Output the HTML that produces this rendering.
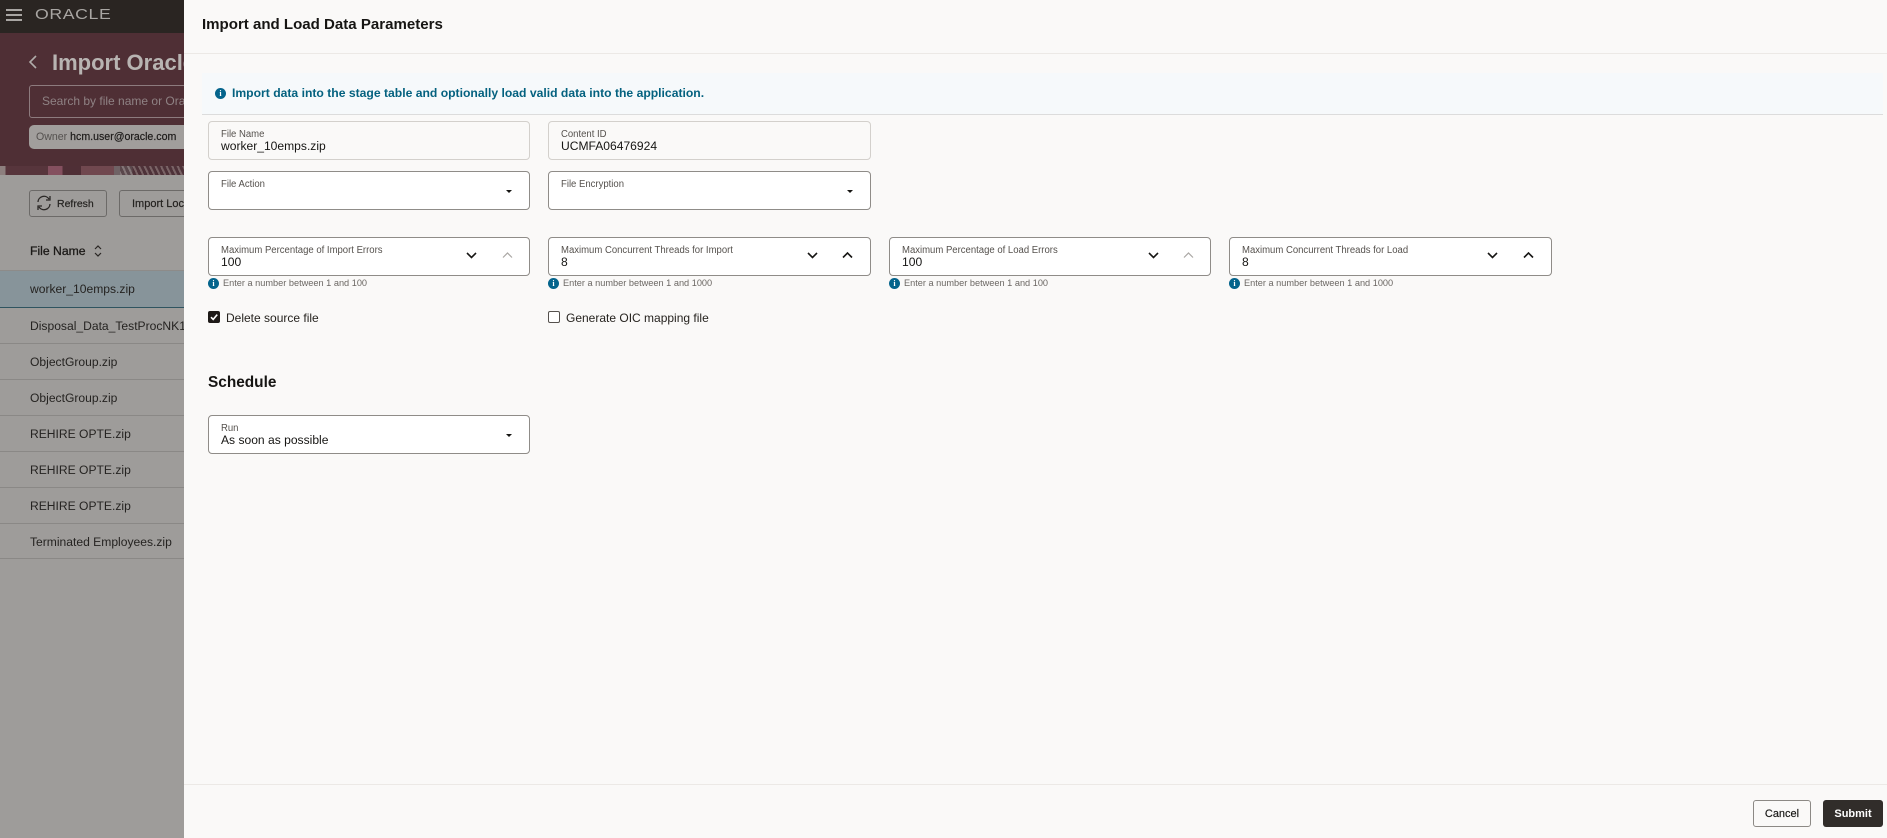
<!DOCTYPE html>
<html><head><meta charset="utf-8"><style>
*{box-sizing:border-box}
html,body{margin:0;padding:0;width:1887px;height:838px;overflow:hidden;background:#9e9c9a;font-family:"Liberation Sans",sans-serif;color:#161513}
.a{position:absolute;white-space:nowrap}
.left{position:absolute;left:0;top:0;width:184px;height:838px;overflow:hidden;background:#9e9c9a}
.row{position:absolute;left:0;width:184px;height:36px;border-bottom:1px solid #8a8886;font-size:12.1px;color:#252321;padding-left:30px;line-height:36px;white-space:nowrap}
.panel{position:absolute;left:184px;top:0;width:1703px;height:838px;background:#faf9f8}
.f{position:absolute;width:322px;height:39px;background:#fff;border:1px solid #8f8c88;border-radius:4px}
.f.ro{background:#faf9f8;border-color:#d3d0cc}
.f .l{position:absolute;left:12px;top:7px;font-size:9.9px;color:#55514d;white-space:nowrap;transform:scaleX(.965);transform-origin:left}
.f .v{position:absolute;left:12px;top:17px;font-size:12.4px;color:#161513;white-space:nowrap;transform:scaleX(.975);transform-origin:left}
.car{position:absolute;left:297px;top:18px;width:0;height:0;border-left:3.5px solid transparent;border-right:3.5px solid transparent;border-top:3.5px solid #161513}
.h{position:absolute;font-size:9.2px;color:#6b6763;white-space:nowrap}
.ic{position:absolute;width:11px;height:11px;border-radius:50%;background:#04648c;color:#fff;font-size:8px;font-weight:bold;text-align:center;line-height:11px;font-family:"Liberation Serif",serif}
svg{position:absolute;overflow:visible}
</style></head><body>
<div class="left">
<div class="a" style="left:0;top:0;width:184px;height:33px;background:#2a2522"></div>
<div class="a" style="left:6px;top:9px;width:16px;height:2px;background:#a9a6a3"></div>
<div class="a" style="left:6px;top:14px;width:16px;height:2px;background:#a9a6a3"></div>
<div class="a" style="left:6px;top:19px;width:16px;height:2px;background:#a9a6a3"></div>
<div class="a" style="left:35px;top:5px;font-size:14.5px;letter-spacing:.5px;color:#a9a6a3;transform:scaleX(1.22);transform-origin:left;line-height:20px">ORACLE</div>
<div class="a" style="left:0;top:33px;width:184px;height:133px;background:#4f2f35"></div>
<div class="a" style="left:0;top:166px;width:184px;height:9px;background:linear-gradient(90deg,#8d7f7e 0 3%,#57353c 3% 26%,#84505f 26% 34%,#4f2f36 34% 44%,#70484f 44% 62%,#6f6265 62% 72%,#57383e 72% 100%)"></div>
<div class="a" style="left:120px;top:166px;width:64px;height:9px;background:repeating-linear-gradient(65deg,rgba(150,135,135,.55) 0 2px,rgba(70,45,52,.5) 2px 5px)"></div>
<svg style="left:0;top:0" width="184" height="100"><path d="M36 56 L30 62 L36 68" fill="none" stroke="#b0acaa" stroke-width="1.6"/></svg>
<div class="a" style="left:52px;top:49px;font-size:22px;font-weight:bold;color:#b8b4b2;line-height:28px">Import Oracle</div>
<div class="a" style="left:29px;top:85px;width:200px;height:33px;border:1px solid #8d7b7e;border-radius:3px"></div>
<div class="a" style="left:42px;top:93px;font-size:12px;color:#8f8284;line-height:16px">Search by file name or Oracle</div>
<div class="a" style="left:29px;top:125px;width:200px;height:24px;background:#a19e9c;border-radius:5px"></div>
<div class="a" style="left:36px;top:130px;font-size:10.6px;color:#55514f;line-height:15px">Owner <span style="color:#1e1b1a;-webkit-text-stroke:.2px #1e1b1a">hcm.user@oracle.com</span></div>
<div class="a" style="left:29px;top:190px;width:78px;height:27px;border:1px solid #6c6a68;border-radius:3px"></div>
<svg style="left:36px;top:195px" width="16" height="16" viewBox="0 0 16 16" fill="none" stroke="#2a2725" stroke-width="1.3"><path d="M2 7A6 6 0 0 1 13 4M14 1v4h-4M14 9A6 6 0 0 1 3 12M2 15v-4h4"/></svg>
<div class="a" style="left:57px;top:197px;font-size:10.5px;color:#252321;line-height:15px;-webkit-text-stroke:.2px #252321">Refresh</div>
<div class="a" style="left:119px;top:190px;width:100px;height:27px;border:1px solid #6c6a68;border-radius:3px"></div>
<div class="a" style="left:132px;top:197px;font-size:11px;color:#252321;line-height:15px;-webkit-text-stroke:.2px #252321">Import Local</div>
<div class="a" style="left:30px;top:243px;font-size:12.2px;color:#1d1b19;line-height:17px;-webkit-text-stroke:.3px #1d1b19">File Name</div>
<svg style="left:92px;top:244px" width="12" height="14" fill="none" stroke="#2a2725" stroke-width="1.2"><path d="M3 5L6 2L9 5M3 9L6 12L9 9"/></svg>
<div class="a" style="left:0;top:270px;width:184px;height:1px;background:#8d8b89"></div>
<div class="row" style="top:271px;height:37px;background:#87949a;border-bottom:1px solid #2f5460">worker_10emps.zip</div>
<div class="row" style="top:308px">Disposal_Data_TestProcNK1.zip</div>
<div class="row" style="top:344px">ObjectGroup.zip</div>
<div class="row" style="top:380px">ObjectGroup.zip</div>
<div class="row" style="top:416px">REHIRE OPTE.zip</div>
<div class="row" style="top:452px">REHIRE OPTE.zip</div>
<div class="row" style="top:488px">REHIRE OPTE.zip</div>
<div class="row" style="top:524px;height:35px">Terminated Employees.zip</div>
</div>

<div class="panel">
<div class="a" style="left:18px;top:15px;font-size:15.05px;font-weight:bold;color:#161513;line-height:20px">Import and Load Data Parameters</div>
<div class="a" style="left:0;top:53px;width:1703px;height:1px;background:#ece9e6"></div>
<div class="a" style="left:18px;top:73px;width:1681px;height:42px;background:#f6f9fb;border-bottom:1px solid #dcdcdc"></div>
<div class="ic" style="left:31px;top:88px;background:#04648c">i</div>
<div class="a" style="left:48px;top:85px;font-size:12.17px;font-weight:bold;color:#04617f;line-height:16px">Import data into the stage table and optionally load valid data into the application.</div>
</div>

<div class="f ro" style="left:208px;top:121px"><div class="l">File Name</div><div class="v">worker_10emps.zip</div></div>
<div class="f ro" style="left:548px;top:121px;width:323px"><div class="l">Content ID</div><div class="v">UCMFA06476924</div></div>
<div class="f" style="left:208px;top:171px"><div class="l">File Action</div><div class="car"></div></div>
<div class="f" style="left:548px;top:171px;width:323px"><div class="l">File Encryption</div><div class="car" style="left:298px"></div></div>

<div class="f" style="left:208px;top:237px"><div class="l">Maximum Percentage of Import Errors</div><div class="v">100</div>
<svg style="left:257px;top:13px" width="12" height="10" fill="none" stroke="#161513" stroke-width="1.6"><path d="M1 2L5.5 6.5L10 2"/></svg>
<svg style="left:293px;top:13px" width="12" height="10" fill="none" stroke="#aaa7a4" stroke-width="1.2"><path d="M1 6.5L5.5 2L10 6.5"/></svg></div>
<div class="f" style="left:548px;top:237px;width:323px"><div class="l">Maximum Concurrent Threads for Import</div><div class="v">8</div>
<svg style="left:258px;top:13px" width="12" height="10" fill="none" stroke="#161513" stroke-width="1.6"><path d="M1 2L5.5 6.5L10 2"/></svg>
<svg style="left:293px;top:13px" width="12" height="10" fill="none" stroke="#161513" stroke-width="1.6"><path d="M1 6.5L5.5 2L10 6.5"/></svg></div>
<div class="f" style="left:889px;top:237px"><div class="l">Maximum Percentage of Load Errors</div><div class="v">100</div>
<svg style="left:258px;top:13px" width="12" height="10" fill="none" stroke="#161513" stroke-width="1.6"><path d="M1 2L5.5 6.5L10 2"/></svg>
<svg style="left:293px;top:13px" width="12" height="10" fill="none" stroke="#aaa7a4" stroke-width="1.2"><path d="M1 6.5L5.5 2L10 6.5"/></svg></div>
<div class="f" style="left:1229px;top:237px;width:323px"><div class="l">Maximum Concurrent Threads for Load</div><div class="v">8</div>
<svg style="left:257px;top:13px" width="12" height="10" fill="none" stroke="#161513" stroke-width="1.6"><path d="M1 2L5.5 6.5L10 2"/></svg>
<svg style="left:293px;top:13px" width="12" height="10" fill="none" stroke="#161513" stroke-width="1.6"><path d="M1 6.5L5.5 2L10 6.5"/></svg></div>

<div class="ic" style="left:208px;top:278px">i</div><div class="h" style="left:223px;top:278px">Enter a number between 1 and 100</div>
<div class="ic" style="left:548px;top:278px">i</div><div class="h" style="left:563px;top:278px">Enter a number between 1 and 1000</div>
<div class="ic" style="left:889px;top:278px">i</div><div class="h" style="left:904px;top:278px">Enter a number between 1 and 100</div>
<div class="ic" style="left:1229px;top:278px">i</div><div class="h" style="left:1244px;top:278px">Enter a number between 1 and 1000</div>

<div class="a" style="left:208px;top:311px;width:12px;height:12px;background:#1e1a18;border-radius:2px"></div>
<svg style="left:208px;top:311px" width="12" height="12" fill="none" stroke="#fff" stroke-width="1.6"><path d="M3 6.2L5.2 8.4L9.2 3.6"/></svg>
<div class="a" style="left:226px;top:310px;font-size:12px;color:#26231f;line-height:16px">Delete source file</div>
<div class="a" style="left:548px;top:311px;width:12px;height:12px;background:#fff;border:1.2px solid #55514d;border-radius:2px"></div>
<div class="a" style="left:566px;top:310px;font-size:12px;color:#26231f;line-height:16px">Generate OIC mapping file</div>

<div class="a" style="left:208px;top:373px;font-size:15.4px;font-weight:bold;color:#161513;line-height:20px">Schedule</div>
<div class="f" style="left:208px;top:415px"><div class="l">Run</div><div class="v">As soon as possible</div><div class="car"></div></div>

<div class="a" style="left:184px;top:784px;width:1703px;height:1px;background:#ece9e6"></div>
<div class="a" style="left:1753px;top:800px;width:58px;height:27px;border:1px solid #8c8985;border-radius:3px;background:#faf9f8;font-size:11px;text-align:center;line-height:26px;color:#161513;-webkit-text-stroke:.15px #161513">Cancel</div>
<div class="a" style="left:1823px;top:800px;width:60px;height:27px;border-radius:3px;background:#312d2a;font-size:11px;font-weight:bold;text-align:center;line-height:28px;color:#fff">Submit</div>
</body></html>
